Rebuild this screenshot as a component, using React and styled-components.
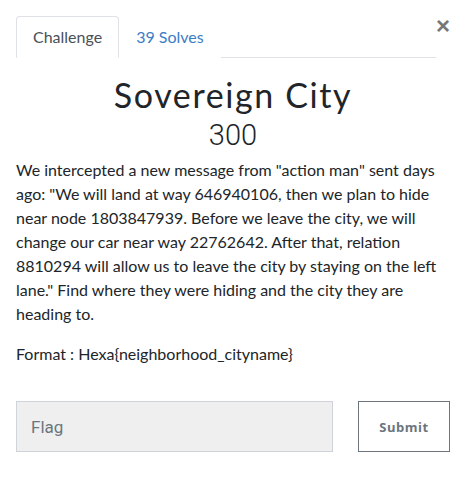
import React from "react";
import styled, { createGlobalStyle } from "styled-components";

const GlobalStyle = createGlobalStyle`
  html, body {
    margin: 0;
    padding: 0;
    background: #fff;
  }
  body {
    font-family: Lato, "Open Sans", sans-serif;
    color: #212529;
  }
`;

const Modal = styled.div`
  position: relative;
  width: 466px;
  height: 485px;
  box-sizing: border-box;
  padding: 16px;
`;

const CloseButton = styled.button`
  position: absolute;
  top: 14px;
  right: 16px;
  border: 0;
  background: none;
  padding: 0;
  font-family: "Liberation Sans", Arial, sans-serif;
  font-size: 24px;
  font-weight: 700;
  line-height: 24px;
  color: #777;
  cursor: pointer;
`;

const Tabs = styled.ul`
  display: flex;
  list-style: none;
  margin: 0 14px 0 0;
  padding: 0;
  border-bottom: 1px solid #dee2e6;
`;

const Tab = styled.li`
  margin-bottom: -1px;
  padding: 8px 16px;
  font-size: 16px;
  line-height: 24px;
  border: 1px solid ${(p) => (p.$active ? "#dee2e6" : "transparent")};
  border-bottom-color: ${(p) => (p.$active ? "#fff" : "transparent")};
  border-radius: 4px 4px 0 0;
  background: #fff;
  color: ${(p) => (p.$active ? "#495057" : "#3b7dc4")};
`;

const Title = styled.h2`
  margin: 17px 0 0;
  text-align: center;
  font-family: Lato, sans-serif;
  font-weight: 400;
  font-size: 34px;
  line-height: 40px;
  letter-spacing: 1.6px;
  color: #212529;
`;

const Points = styled.h3`
  margin: 3px 0 6px;
  text-align: center;
  font-family: Roboto, "Liberation Sans", sans-serif;
  font-weight: 300;
  font-size: 29px;
  line-height: 34px;
  color: #212529;
`;

const Text = styled.p`
  margin: 0 0 16px;
  font-size: 16px;
  line-height: 24px;
`;

const SubmitRow = styled.form`
  display: flex;
  align-items: flex-start;
  gap: 25px;
  margin-top: 35px;
`;

const FlagInput = styled.input`
  width: 317px;
  height: 51px;
  box-sizing: border-box;
  padding: 0 14px;
  border: 1px solid #ced4da;
  background: #efefef;
  font-family: Roboto, "Liberation Sans", sans-serif;
  font-size: 17px;
  color: #495057;
  outline: none;
  &::placeholder {
    color: #6c757d;
  }
`;

const SubmitButton = styled.button`
  width: 92px;
  height: 51px;
  box-sizing: border-box;
  border: 1px solid #6c757d;
  background: #fff;
  font-family: "Open Sans", Lato, sans-serif;
  font-weight: 700;
  font-size: 13px;
  letter-spacing: 0.5px;
  color: #6c757d;
  cursor: pointer;
`;

export default function App() {
  return (
    <>
      <GlobalStyle />
      <Modal>
        <CloseButton aria-label="Close">×</CloseButton>
        <Tabs>
          <Tab $active>Challenge</Tab>
          <Tab>39 Solves</Tab>
        </Tabs>
        <Title>Sovereign City</Title>
        <Points>300</Points>
        <Text>
          We intercepted a new message from "action man" sent days ago: "We
          will land at way 646940106, then we plan to hide near node
          1803847939. Before we leave the city, we will change our car near way
          22762642. After that, relation 8810294 will allow us to leave the
          city by staying on the left lane." Find where they were hiding and
          the city they are heading to.
        </Text>
        <Text>Format : Hexa{"{"}neighborhood_cityname{"}"}</Text>
        <SubmitRow onSubmit={(e) => e.preventDefault()}>
          <FlagInput placeholder="Flag" />
          <SubmitButton type="submit">Submit</SubmitButton>
        </SubmitRow>
      </Modal>
    </>
  );
}
